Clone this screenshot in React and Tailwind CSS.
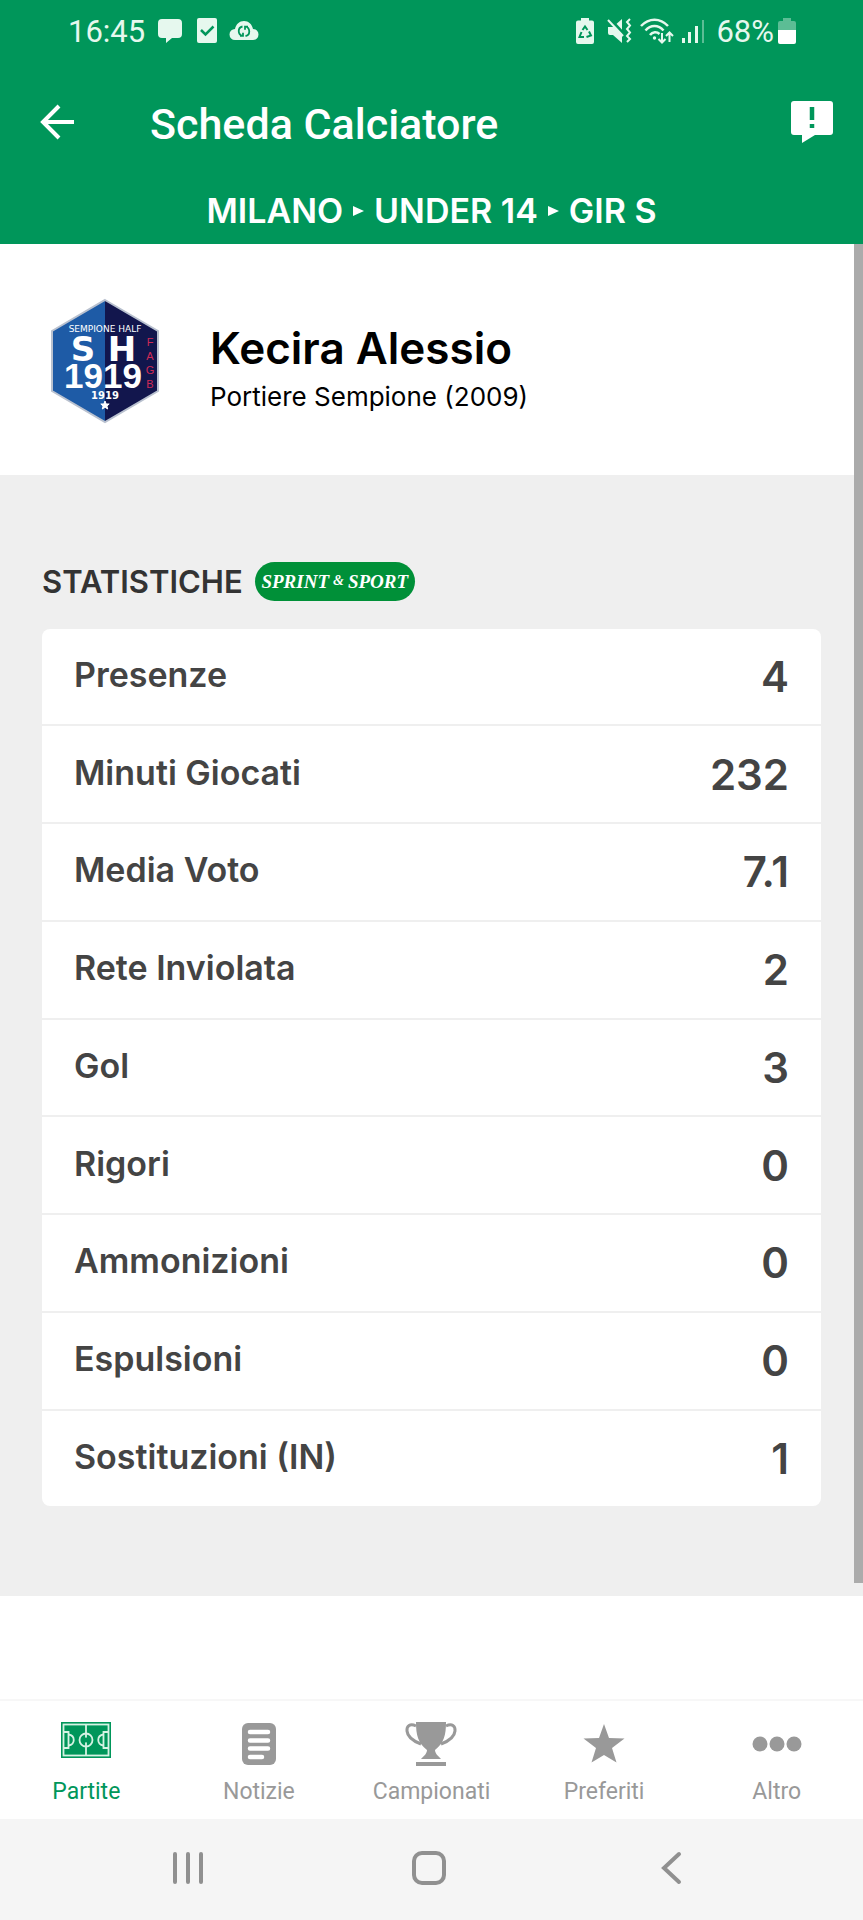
import React, { useState } from 'react';

const STATS = [
  { label: 'Presenze', value: '4' },
  { label: 'Minuti Giocati', value: '232' },
  { label: 'Media Voto', value: '7.1' },
  { label: 'Rete Inviolata', value: '2' },
  { label: 'Gol', value: '3' },
  { label: 'Rigori', value: '0' },
  { label: 'Ammonizioni', value: '0' },
  { label: 'Espulsioni', value: '0' },
  { label: 'Sostituzioni (IN)', value: '1' },
];

/* status bar icons */

function StatusBar() {
  return (
    <div className="flex h-[62px] items-center justify-between pl-[68px] pr-[67px] text-[#e6f8ee]">
      <div className="flex items-center">
        <span className="text-[31px] leading-none">16:45</span>
        <svg className="ml-3" width="26" height="26" viewBox="0 0 26 26" fill="currentColor">
          <path d="M5 1h16a4 4 0 0 1 4 4v11a4 4 0 0 1-4 4h-6l-6 5v-5H5a4 4 0 0 1-4-4V5a4 4 0 0 1 4-4z" />
        </svg>
        <svg className="ml-3" width="26" height="26" viewBox="0 0 26 26">
          <rect x="2" y="0" width="20" height="25" rx="2" fill="currentColor" />
          <path d="M6 12l4.500 4.500 8-8" fill="none" stroke="#00965a" strokeWidth="2.500" />
        </svg>
        <svg className="ml-2" width="30" height="26" viewBox="0 0 30 26">
          <path d="M6 22a5.500 5.500 0 0 1 0-11C7 6 10.500 3 15 3s8 3 9 8a5.500 5.500 0 0 1 0 11z" fill="currentColor" />
          <g fill="none" stroke="#00965a" strokeWidth="1.800">
            <path d="M13.500 8.500c-5 1-5 8 0 9.500M11 17.800h3v-3" />
            <path d="M16.500 18c5-1 5-8 0-9.500M19 8.700h-3v3" />
          </g>
        </svg>
      </div>
      <div className="flex items-center">
        <svg width="18" height="26" viewBox="0 0 18 26">
          <path d="M5 0h8v2.500h3a2 2 0 0 1 2 2V24a2 2 0 0 1-2 2H2a2 2 0 0 1-2-2V4.500a2 2 0 0 1 2-2h3z" fill="currentColor" />
          <g fill="none" stroke="#00965a" strokeWidth="2">
            <path d="M6.500 12L9 8.500l2.500 3.500" />
            <path d="M13 13.500l2 4-4.500 1.500" />
            <path d="M8 19H3.500l2-5" />
          </g>
        </svg>
        <svg className="ml-3" width="26" height="26" viewBox="0 0 26 26">
          <path d="M2 9h5l9-8v24l-9-8H4a2 2 0 0 1-2-2z" fill="currentColor" />
          <path d="M3 0l15 16" stroke="#00965a" strokeWidth="3" />
          <path d="M2 2l15 16" stroke="currentColor" strokeWidth="2" />
          <path d="M24 1l-3 3 3 3.500-3 3.500 3 3.500-3 3.500 3 3-3 3" fill="none" stroke="currentColor" strokeWidth="2" />
        </svg>
        <svg className="ml-2" width="34" height="26" viewBox="0 0 34 26" fill="none" stroke="currentColor">
          <path d="M1 8c8-8.500 19-8.500 27 0M5.500 12.500c5-6 13-6 18 0M10 17c2.500-3.500 7-3.500 9.500-1" strokeWidth="2.500" />
          <circle cx="14.500" cy="20" r="1.700" fill="currentColor" stroke="none" />
          <path d="M22 15v9M18.500 21l3.500 3.500 3.500-3.500M29.500 24v-9M26 18l3.500-3.500L33 18" strokeWidth="2" />
        </svg>
        <svg className="ml-2" width="24" height="26" viewBox="0 0 24 26" fill="currentColor">
          <rect x="0" y="20" width="3" height="5" />
          <rect x="6" y="14" width="3" height="11" />
          <rect x="13" y="8" width="3" height="17" />
          <rect x="20" y="2" width="2" height="23" opacity="0.400" />
        </svg>
        <span className="ml-[10px] text-[31px] leading-none">68%</span>
        <svg className="ml-1" width="18" height="26" viewBox="0 0 18 26" fill="currentColor">
          <path d="M5 0h8v3h3a2 2 0 0 1 2 2v7H0V5a2 2 0 0 1 2-2h3z" opacity="0.400" />
          <path d="M0 12h18v12a2 2 0 0 1-2 2H2a2 2 0 0 1-2-2z" fill="#fff" />
        </svg>
      </div>
    </div>
  );
}

function Separator() {
  return (
    <svg width="11" height="10" viewBox="0 0 11 10" fill="currentColor" aria-hidden="true">
      <path d="M0 0l11 5-11 5z" />
    </svg>
  );
}

function TeamBadge() {
  return (
    <svg className="shrink-0" width="120" height="130" viewBox="0 0 120 130" role="img" aria-label="Sempione Half 1919">
      <path d="M60 5v122L7 96V36z" fill="#1e5ba6" />
      <path d="M60 5v122l53-31V36z" fill="#12164d" />
      <path d="M60 5l53 31v60l-53 31L7 96V36z" fill="none" stroke="#b9c1cf" strokeWidth="2" />
      <g fill="#fff" fontWeight="700" textAnchor="middle" fontFamily='"DejaVu Sans", sans-serif'>
        <text x="60" y="37" fontSize="9" fontWeight="400">SEMPIONE HALF</text>
        <text x="38" y="66" fontSize="34">S</text>
        <text x="77" y="66" fontSize="34">H</text>
        <text x="58" y="93" fontSize="35" fontFamily='"Liberation Sans", sans-serif'>1919</text>
        <text x="60" y="104" fontSize="10">1919</text>
      </g>
      <g fill="#d02a56" fontSize="11" textAnchor="middle" fontFamily='"Liberation Sans", sans-serif'>
        <text x="105" y="51">F</text>
        <text x="105" y="65">A</text>
        <text x="105" y="79">G</text>
        <text x="105" y="93">B</text>
      </g>
      <path d="M60 106l1.200 3h3l-2.300 2 .8 3-2.700-1.700-2.700 1.700.8-3-2.300-2h3z" fill="#fff" stroke="#fff" />
    </svg>
  );
}

/* bottom tab icons */

function PitchIcon() {
  return (
    <svg width="52" height="44" viewBox="0 0 52 44">
      <rect x="1" y="1" width="50" height="36" fill="#00965a" />
      <g fill="none" stroke="#d5f2e3" strokeWidth="1.800">
        <rect x="3.500" y="3.500" width="45" height="31" />
        <path d="M26 3.500v31M3.500 11h5v16h-5M48.500 11h-5v16h5" />
        <path d="M8.500 13.500c7 1 7 10 0 11M43.500 13.500c-7 1-7 10 0 11" />
        <circle cx="26" cy="19" r="6.500" />
      </g>
      <circle cx="26" cy="19" r="2.500" fill="#00965a" />
    </svg>
  );
}

function NewsIcon() {
  return (
    <svg width="52" height="44" viewBox="0 0 52 44">
      <rect x="9" y="2" width="34" height="42" rx="6" fill="#999" />
      <path d="M17 11h18M17 19.500h18M17 27.500h18M17 36h12" stroke="#fff" strokeWidth="4.500" strokeLinecap="round" />
    </svg>
  );
}

function TrophyIcon() {
  return (
    <svg width="52" height="46" viewBox="0 0 52 46">
      <path d="M11 1h30c0 13-2 21-11 28 0 3 2 5 6 9H16c4-4 6-6 6-9C13 22 11 14 11 1z" fill="#999" />
      <path d="M11 5C5 2 1.500 5 2 10c.5 6 6 10 14 13M41 5c6-3 9.500 0 9 5-.5 6-6 10-14 13" fill="none" stroke="#999" strokeWidth="3" />
      <rect x="11" y="41" width="30" height="4" fill="#999" />
    </svg>
  );
}

function StarIcon() {
  return (
    <svg width="52" height="44" viewBox="0 0 52 44">
      <path d="M26 3l5 14 15.500.5-12.500 9.500 4.500 14.500L26 34l-12.500 7.500L18 27 5.500 17.500 21 17z" fill="#999" />
    </svg>
  );
}

function DotsIcon() {
  return (
    <svg width="52" height="44" viewBox="0 0 52 44" fill="#999">
      <circle cx="9" cy="23" r="7.500" />
      <circle cx="26" cy="23" r="7.500" />
      <circle cx="43" cy="23" r="7.500" />
    </svg>
  );
}

const TABS = [
  { name: 'Partite', Icon: PitchIcon },
  { name: 'Notizie', Icon: NewsIcon },
  { name: 'Campionati', Icon: TrophyIcon },
  { name: 'Preferiti', Icon: StarIcon },
  { name: 'Altro', Icon: DotsIcon },
];

function App() {
  const [activeTab, setActiveTab] = useState('Partite');

  return (
    <div className="flex min-h-screen flex-col bg-white font-['Roboto',sans-serif]">
      <header className="bg-[#00965a] text-white">
        <StatusBar />
        <div className="flex h-[120px] items-center pl-[38px] pr-[29px]">
          <button type="button" aria-label="Indietro">
            <svg width="38" height="36" viewBox="0 0 38 36" fill="none" stroke="currentColor" strokeWidth="4">
              <path d="M36 18H5M21 2L5 18l16 16" />
            </svg>
          </button>
          <h1 className="ml-[74px] flex-1 pt-1 text-[43px] font-medium leading-none">Scheda Calciatore</h1>
          <button type="button" aria-label="Segnala">
            <svg width="44" height="44" viewBox="0 0 44 44">
              <path d="M4 1h36a3 3 0 0 1 3 3v28a3 3 0 0 1-3 3H25l-13 8v-8H4a3 3 0 0 1-3-3V4a3 3 0 0 1 3-3z" fill="#fff" />
              <path d="M22 7v13M22 24v4" stroke="#00965a" strokeWidth="4.500" />
            </svg>
          </button>
        </div>
        <nav className="flex h-[62px] items-center justify-center gap-[10px] pb-1 font-['Inter',sans-serif] text-[34px] font-semibold leading-none">
          <span>MILANO</span>
          <Separator />
          <span>UNDER 14</span>
          <Separator />
          <span>GIR S</span>
        </nav>
      </header>

      <main className="relative flex-1 font-['Inter',sans-serif]">
        <section className="flex h-[231px] items-center gap-[45px] px-[45px]">
          <TeamBadge />
          <div className="pt-5">
            <h2 className="text-[44px] font-semibold leading-[54px] text-black">Kecira Alessio</h2>
            <p className="text-[26px] leading-[44px] text-black">Portiere Sempione (2009)</p>
          </div>
        </section>

        <section className="bg-[#efefef] px-[42px] pt-[86px] pb-[90px]">
          <div className="mb-7 flex h-10 items-center gap-3">
            <h3 className="text-[31px] font-semibold leading-none text-[#333]">STATISTICHE</h3>
            <span className="flex h-[39px] w-[160px] items-center justify-center gap-1 rounded-full bg-[#009038] font-['Liberation_Serif',serif] text-[19px] font-bold italic leading-none text-white">
              SPRINT<span className="text-[14px]">&amp;</span>SPORT
            </span>
          </div>

          <div className="overflow-hidden rounded-lg bg-white">
            <table className="h-[877px] w-full border-collapse text-[#444]">
              <tbody>
                {STATS.map((stat) => (
                  <tr key={stat.label} className="border-b-2 border-[#efefef] last:border-b-0">
                    <th scope="row" className="pb-1 pl-8 text-left text-[34px] font-semibold">
                      {stat.label}
                    </th>
                    <td className="pr-8 text-right text-[42px] font-semibold">{stat.value}</td>
                  </tr>
                ))}
              </tbody>
            </table>
          </div>
        </section>

        {/* scrollbar */}
        <div className="absolute right-0 top-0 bottom-[116px] w-[9px] bg-[#ababab]" />
      </main>

      <nav className="grid h-[120px] grid-cols-5 border-t-2 border-[#f7f7f7]">
        {TABS.map(({ name, Icon }) => (
          <button
            key={name}
            type="button"
            onClick={() => setActiveTab(name)}
            className={`flex flex-col items-center pt-5 text-[23px] ${
              name === activeTab ? 'text-[#00965a]' : 'text-[#999]'
            }`}
          >
            <span className="flex h-[46px] items-start">
              <Icon />
            </span>
            <span className="leading-[50px]">{name}</span>
          </button>
        ))}
      </nav>

      <div className="grid h-[101px] grid-cols-3 bg-[#f5f5f5] pb-1 pl-[67px] pr-[71px]">
        <button type="button" aria-label="Recenti" className="flex items-center justify-center">
          <svg width="34" height="34" viewBox="0 0 34 34" stroke="#909090" strokeWidth="4" strokeLinecap="round">
            <path d="M4 3v28M17 3v28M30 3v28" />
          </svg>
        </button>
        <button type="button" aria-label="Home" className="flex items-center justify-center">
          <svg width="34" height="34" viewBox="0 0 34 34" fill="none" stroke="#909090" strokeWidth="4">
            <rect x="2" y="2" width="30" height="30" rx="8" />
          </svg>
        </button>
        <button type="button" aria-label="Indietro" className="flex items-center justify-center">
          <svg width="34" height="34" viewBox="0 0 34 34" fill="none" stroke="#909090" strokeWidth="4" strokeLinecap="round">
            <path d="M25 3L10 17l15 14" />
          </svg>
        </button>
      </div>
    </div>
  );
}

export default App;
